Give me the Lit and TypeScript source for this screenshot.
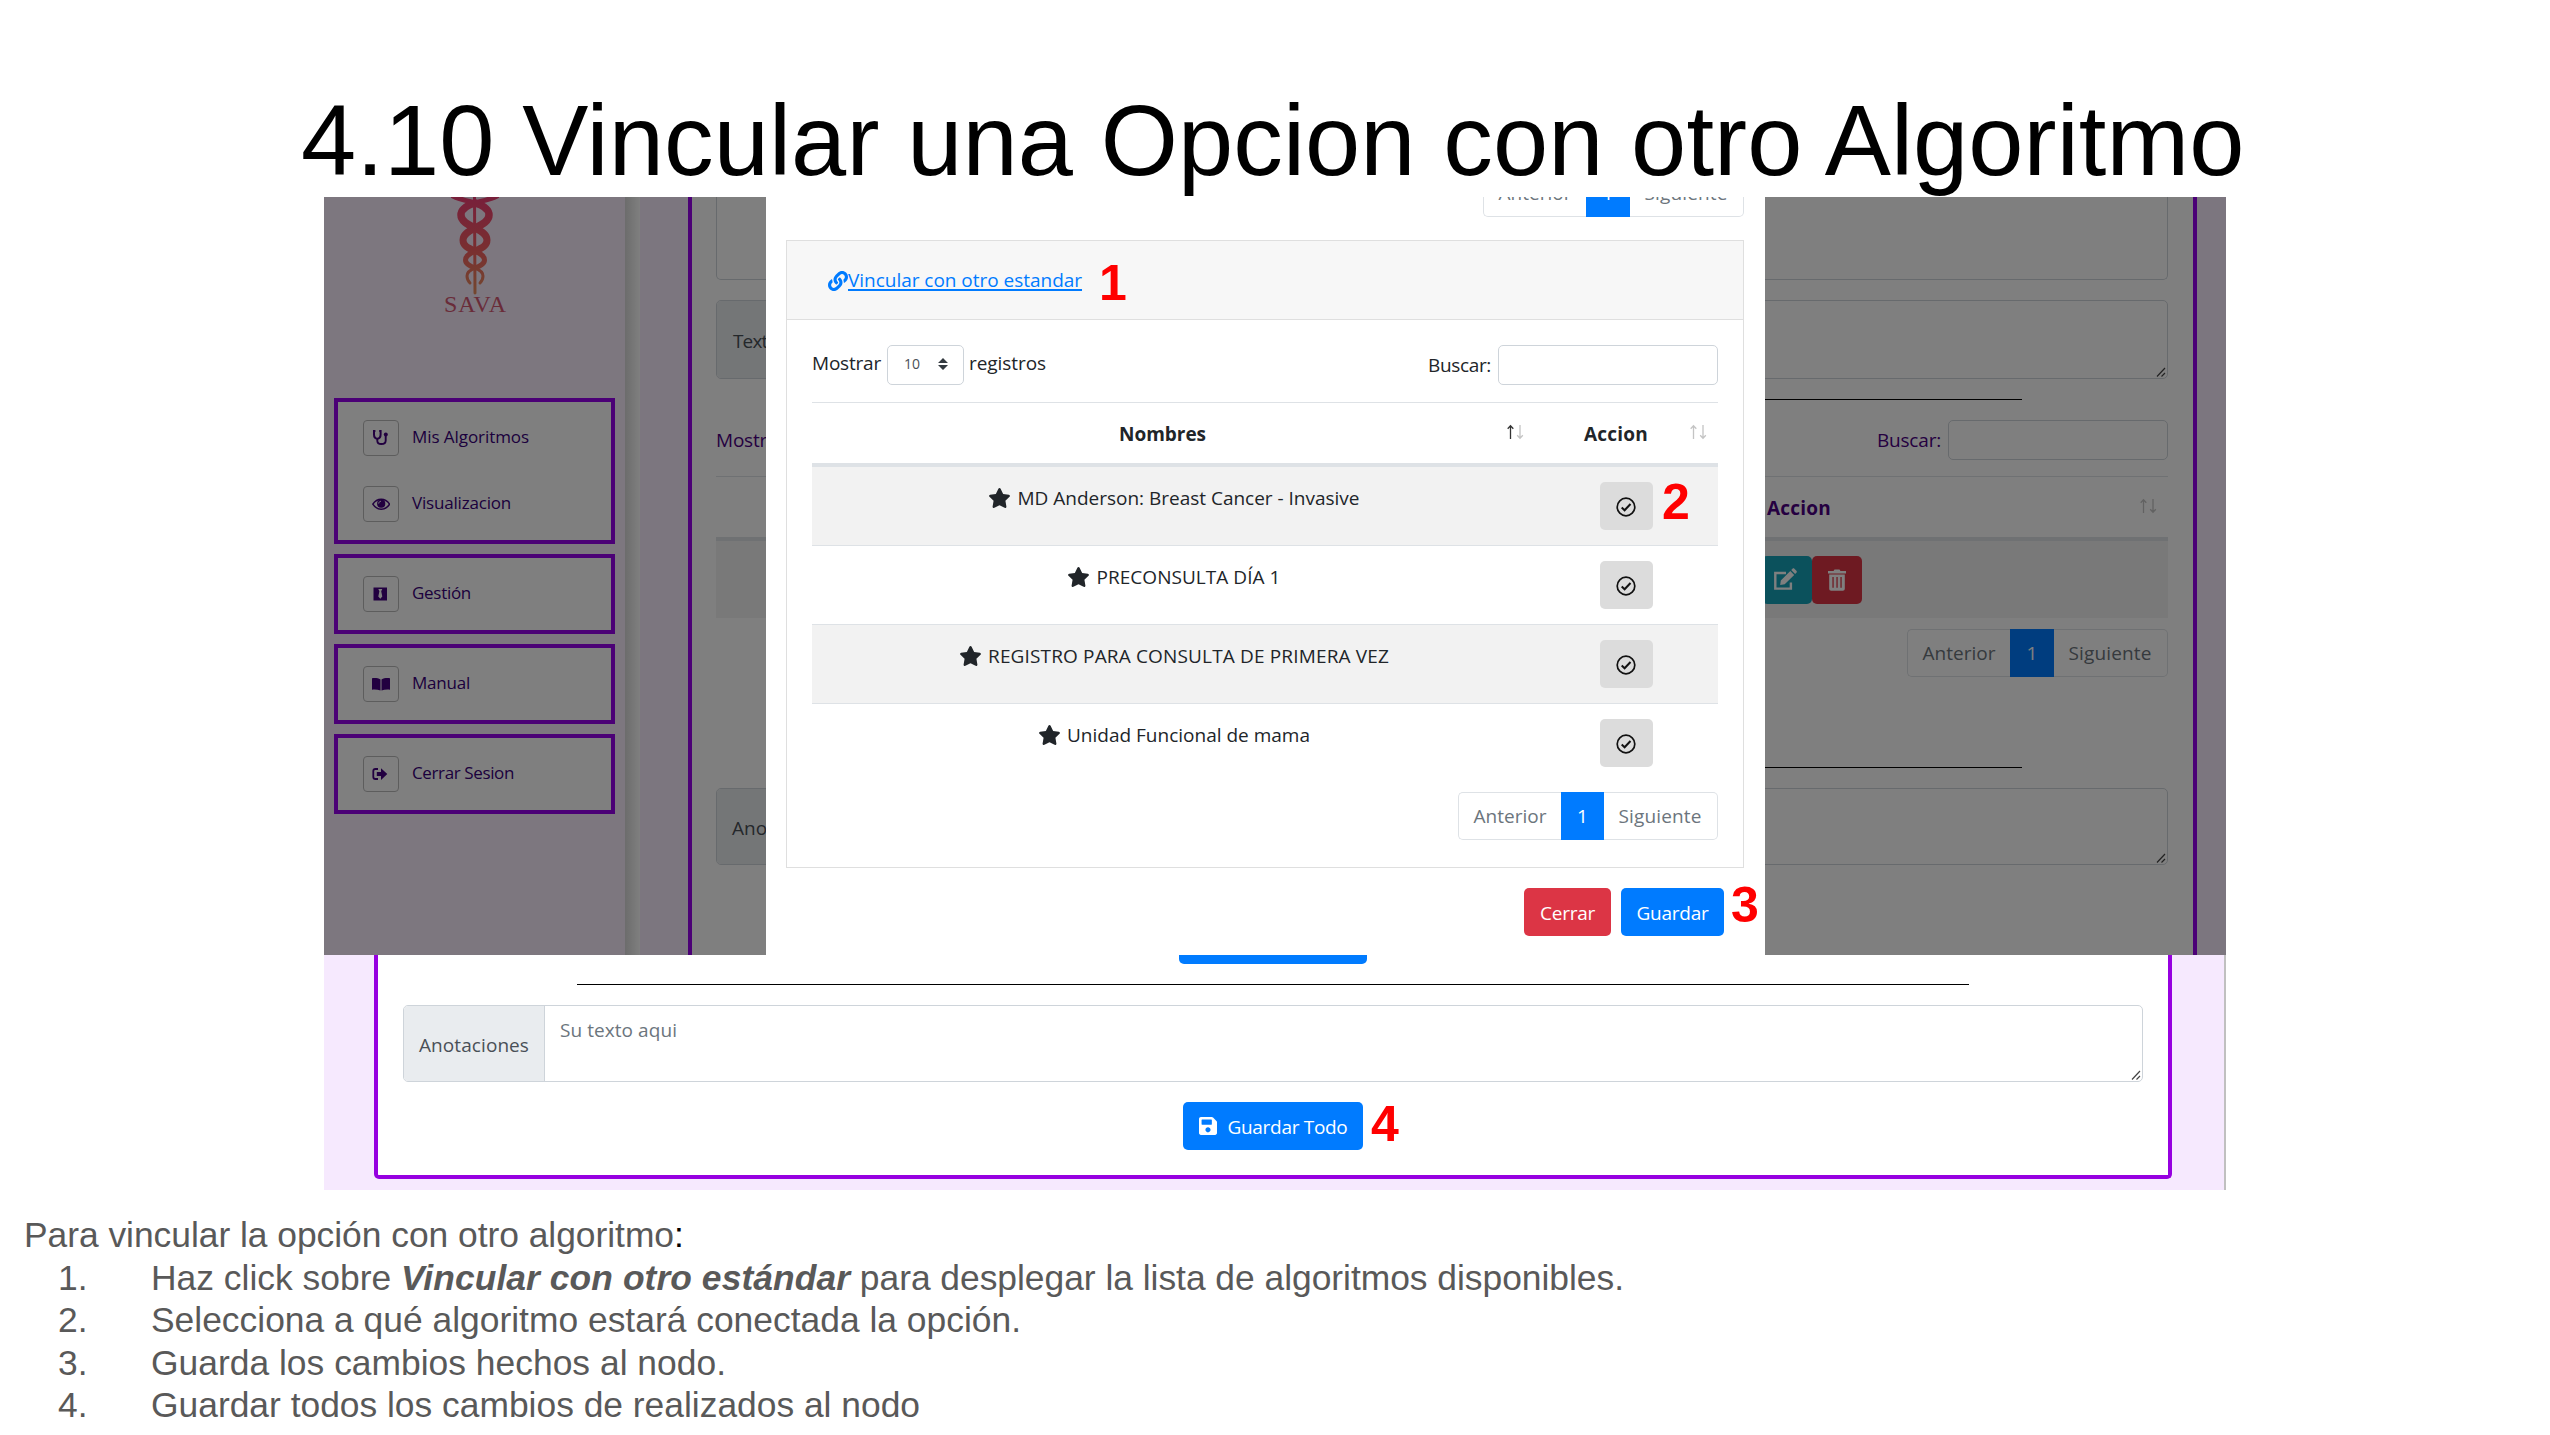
import { LitElement, html, css, svg } from "lit";
import { customElement } from "lit/decorators.js";
import { styleMap } from "lit/directives/style-map.js";

const UI = '"Open Sans", "Noto Sans", sans-serif';
const ARIAL = '"Liberation Sans", Arial, sans-serif';
const pen = document.createElement("canvas").getContext("2d")!;

/* Text run whose tracking is computed so that it spans the given width. */
const fit = (text: string, width: number, font: string) => {
  pen.font = font;
  const spacing = (width - pen.measureText(text).width) / text.length;
  return html`<span class="run" style=${styleMap({ letterSpacing: `${spacing.toFixed(3)}px` })}>${text}</span>`;
};
const ui = (text: string, width: number, size = 19, weight = 400) => fit(text, width, `${weight} ${size}px ${UI}`);
const doc = (text: string, width: number, size = 35.4, style = "") => fit(text, width, `${style} ${size}px ${ARIAL}`);

const icon = (name: string, box: string, body: unknown) =>
  html`<svg class="icon ${name}" viewBox=${box} fill="currentColor">${body}</svg>`;

const star = icon("star", "18 0 540 512", svg`<path d="M259.3 17.8L194 150.2 47.9 171.5c-26.2 3.8-36.7 36.1-17.7 54.6l105.7 103-25 145.5c-4.5 26.3 23.2 46 46.4 33.7L288 439.6l130.7 68.7c23.2 12.2 50.9-7.4 46.4-33.7l-25-145.5 105.7-103c19-18.5 8.5-50.8-17.7-54.6L382 150.2 316.7 17.8c-11.7-23.6-45.6-23.9-57.4 0z"/>`);
const save = icon("save", "0 32 448 448", svg`<path d="M433.941 129.941l-83.882-83.882A48 48 0 0 0 316.118 32H48C21.49 32 0 53.49 0 80v352c0 26.51 21.49 48 48 48h352c26.51 0 48-21.49 48-48V163.882a48 48 0 0 0-14.059-33.941zM224 416c-35.346 0-64-28.654-64-64 0-35.346 28.654-64 64-64s64 28.654 64 64c0 35.346-28.654 64-64 64zm96-304.52V212c0 6.627-5.373 12-12 12H76c-6.627 0-12-5.373-12-12V108c0-6.627 5.373-12 12-12h228.52c3.183 0 6.235 1.264 8.485 3.515l3.48 3.48A11.996 11.996 0 0 1 320 111.48z"/>`);
const link = icon("link-icon", "0 0 512 512", svg`<path d="M326.612 185.391c59.747 59.809 58.927 155.698.36 214.59-.11.12-.24.25-.36.37l-67.2 67.2c-59.27 59.27-155.699 59.262-214.96 0-59.27-59.26-59.27-155.7 0-214.96l37.106-37.106c9.84-9.84 26.786-3.3 27.294 10.606.648 17.722 3.826 35.527 9.69 52.721 1.986 5.822.567 12.262-3.783 16.612l-13.087 13.087c-28.026 28.026-28.905 73.66-1.155 101.96 28.024 28.579 74.086 28.749 102.325.51l67.2-67.19c28.191-28.191 28.073-73.757 0-101.83-3.701-3.694-7.429-6.564-10.341-8.569a16.037 16.037 0 0 1-6.947-12.606c-.396-10.567 3.348-21.456 11.698-29.806l21.054-21.055c5.521-5.521 14.182-6.199 20.584-1.731a152.482 152.482 0 0 1 20.522 17.197zM467.547 44.449c-59.261-59.262-155.69-59.27-214.96 0l-67.2 67.2c-.12.12-.25.25-.36.37-58.566 58.892-59.387 154.781.36 214.59a152.454 152.454 0 0 0 20.521 17.196c6.402 4.468 15.064 3.789 20.584-1.731l21.054-21.055c8.35-8.35 12.094-19.239 11.698-29.806a16.037 16.037 0 0 0-6.947-12.606c-2.912-2.005-6.64-4.875-10.341-8.569-28.073-28.073-28.191-73.639 0-101.83l67.2-67.19c28.239-28.239 74.3-28.069 102.325.51 27.75 28.3 26.872 73.934-1.155 101.96l-13.087 13.087c-4.35 4.35-5.769 10.79-3.783 16.612 5.864 17.194 9.042 34.999 9.69 52.721.509 13.906 17.454 20.446 27.294 10.606l37.106-37.106c59.271-59.259 59.271-155.699.001-214.959z"/>`);
const check = icon("check", "0 0 20 20", svg`<circle cx="10" cy="10" r="8.8" fill="none" stroke="currentColor" stroke-width="1.7"/><path d="M5.7 10.6l2.9 2.7 5.9-6.3" fill="none" stroke="currentColor" stroke-width="2"/>`);
const stethoscope = icon("nav-icon", "0 0 18 18", svg`<g fill="none" stroke="currentColor"><path d="M3.4 2H2v3.6c0 2.6 1.3 4.1 3.3 4.1s3.3-1.5 3.3-4.1V2H7.2" stroke-width="2"/><path d="M5.3 9.7v2c0 2 1.3 3.3 4 3.3s4.4-1.5 4.4-3.6V7" stroke-width="1.9"/></g><circle cx="13.8" cy="5.600" r="2"/>`);
const eye = icon("nav-icon", "0 0 18 18", svg`<path d="M.8 9.2C3 5.800 5.600 4.200 9.200 4.200s6.200 1.600 8.400 5c-2.200 3.300-4.800 5-8.400 5s-6.200-1.700-8.400-5z" fill="none" stroke="currentColor" stroke-width="1.500"/><circle cx="9.200" cy="8.700" r="4.100"/><path d="M6.700 8.600c0-1.400.9-2.300 2.300-2.300" fill="none" stroke="#fff" stroke-width=".9"/>`);
const tie = icon("nav-icon", "0 0 18 18", svg`<path fill-rule="evenodd" d="M1.500 2.500h13.500v13H1.500zM6.300 4l1.100 2.300-1.100 5.200 2 2.300 2-2.300-1.100-5.200L10.300 4z"/>`);
const book = icon("nav-icon", "0 0 18 18", svg`<path d="M0 3.200c3-.6 6-.2 8.500 1.200v11.200C6 14.600 3 14.300 0 14.700zM18 3.200c-3-.6-6-.2-8.500 1.200v11.200c2.500-1 5.500-1.300 8.500-.9z"/>`);
const exit = icon("nav-icon", "0 0 18 18", svg`<path d="M6 4H3.400C2 4 1.300 4.800 1.300 6v6c0 1.300.8 2 2.100 2H6" fill="none" stroke="currentColor" stroke-width="1.800"/><path d="M4.800 7.100h4.200V3.200l6.300 5.900L9 15v-3.900H4.800z"/>`);
const edit = icon("tool", "0 0 24 24", svg`<path d="M13 5H2.300v15.600h15.600V14.500" fill="none" stroke="currentColor" stroke-width="2.400"/><path d="M7.800 12.400L17.300 3l3.900 3.900-9.500 9.400-4.500.6zM18.200 2.100l1.300-1.300c.6-.6 1.300-.6 1.900 0l2 2c.6.6.6 1.300 0 1.900l-1.300 1.300z"/>`);
const trash = icon("tool", "0 0 24 24", svg`<path fill-rule="evenodd" d="M3 3h5.500L9.500 1.400h5L15.500 3H21v2.400H3zM4.200 6.500h15.600v14.200c0 1.200-.8 2-2 2H6.200c-1.200 0-2-.8-2-2zM7.400 9v10.700h1.300V9zM11.400 9v10.700h1.300V9zM15.400 9v10.700h1.300V9z"/>`);
const grip = icon("grip", "0 0 12 12", svg`<path d="M2 10.500L10 2M6.500 10.500L10 7" fill="none" stroke="#444" stroke-width="1.200"/>`);
const sort = (first: boolean) => html`<svg class="sort" viewBox="0 0 18 16" fill="none" stroke="currentColor" stroke-width="1.300"><path class=${first ? "on" : "off"} d="M4.500 15V2M1.700 4.800L4.500 1.800l2.800 3"/><path class="off" d="M14 1v13M11.200 11.200l2.800 3 2.800-3"/></svg>`;
const strand = svg`<path d="M2-1C10 3 18 4 24 6" stroke-width="5"/><path d="M24 6C34 9 38 13 38 18C38 24 32 27 24 31" stroke-width="7.500"/><path d="M24 31C16 35 12 38 12 43C12 49 17 51 24 54" stroke-width="7"/><path d="M24 54C30 57 33.500 59 33.500 63C33.500 67 29 69 24 71" stroke-width="5"/><path d="M24 71C19 73 16 76 16 79C16 82 17 84 19 86" stroke-width="3"/>`;
const caduceus = html`<svg class="caduceus" viewBox="0 0 48 98" fill="none">
  <defs><linearGradient id="fade" gradientUnits="userSpaceOnUse" x1="0" y1="0" x2="0" y2="98"><stop offset="0" stop-color="#f03f76"/><stop offset=".55" stop-color="#f35f60"/><stop offset="1" stop-color="#e8915f"/></linearGradient></defs>
  <g stroke="url(#fade)" stroke-linecap="round"><path d="M23.500 0L24 96" stroke-width="3"/>${strand}<g transform="matrix(-1 0 0 1 48 0)">${strand}</g></g></svg>`;

const pager = (on = "") => html`<div class="pager"><span class="page first">${ui("Anterior", 73)}</span><span class="page on ${on}">1</span><span class="page last">${ui("Siguiente", 83)}</span></div>`;

const nav = [
  [{ icon: stethoscope, label: "Mis Algoritmos", w: 117 }, { icon: eye, label: "Visualizacion", w: 99 }],
  [{ icon: tie, label: "Gestión", w: 59 }],
  [{ icon: book, label: "Manual", w: 58 }],
  [{ icon: exit, label: "Cerrar Sesion", w: 102 }],
];
const rows = [
  { name: "MD Anderson: Breast Cancer - Invasive", w: 342 },
  { name: "PRECONSULTA DÍA 1", w: 184 },
  { name: "REGISTRO PARA CONSULTA DE PRIMERA VEZ", w: 401 },
  { name: "Unidad Funcional de mama", w: 243 },
];

@customElement("app-root")
export class AppRoot extends LitElement {
  static styles = css`
    :host { display: block; width: 2550px; height: 1435px; overflow: hidden; background: #fff; position: relative; font-family: "Open Sans", "Noto Sans", sans-serif; font-size: 19px; color: #212529; }
    * { box-sizing: border-box; }
    .run { white-space: pre; }
    .icon { display: block; flex: none; }
    .title { height: 197px; margin: 0; padding: 85px 0 0 301px; font: 400 99.2px/112px "Liberation Sans", Arial, sans-serif; color: #000; white-space: nowrap; }
    .figure { width: 1902px; margin-left: 324px; }
    .shot { position: relative; display: flex; height: 758px; overflow: hidden; background: #f9edff; color: #4b0082; }
    .side { width: 301px; flex: none; background: #fbeeff; padding: 0 10px; display: flex; flex-direction: column; gap: 10px; }
    .brand { height: 191px; display: flex; flex-direction: column; align-items: center; }
    .caduceus { width: 48px; height: 98px; flex: none; margin-left: 1px; }
    .brand-name { font: 24px/24px "Liberation Serif", serif; margin-top: -3px; padding-left: 2px; color: #d35873; }
    .group { width: 281px; border: 4px solid #9600ec; background: #fff; padding: 18px 25px; display: flex; flex-direction: column; gap: 30px; }
    .item { display: flex; align-items: center; gap: 13px; height: 36px; font-size: 17px; line-height: 22px; color: #39007a; }
    .item .run { margin-top: -2px; }
    .chip { width: 36px; height: 36px; border: 1px solid #bbb; border-radius: 4px; display: flex; align-items: center; justify-content: center; color: #440080; flex: none; }
    .nav-icon { width: 18px; height: 18px; }
    .edge { width: 15px; flex: none; background: linear-gradient(90deg, #d9d9d9, #fff); }
    .gutter { width: 48px; flex: none; }
    .panel { width: 1509px; flex: none; border: solid #9600ec; border-width: 0 4px; background: #fff; padding: 0 25px 0 24px; display: flex; flex-direction: column; }
    .area { border: 1px solid #ced4da; border-radius: 5px; display: flex; position: relative; flex: none; }
    .area.cut { height: 83px; border-top: 0; border-radius: 0 0 5px 5px; }
    .area.mid { height: 79px; margin-top: 20px; }
    .area.low { height: 77px; margin-top: 20px; }
    .tag { width: 141px; background: #e9ecef; border-right: 1px solid #ced4da; border-radius: 4px 0 0 4px; padding: 2px 0 0 15px; display: flex; align-items: center; color: #495057; flex: none; }
    .area.mid .tag { padding-left: 16px; }
    .grip { position: absolute; right: 0; bottom: 0; width: 12px; height: 12px; }
    .rule { height: 1px; background: #000; flex: none; }
    .panel .rule { width: 1160px; margin: 20px 0 0 146px; }
    .filters { display: flex; justify-content: space-between; flex: none; }
    .panel .filters { margin-top: 20px; height: 56px; }
    .field { display: flex; align-items: center; height: 40px; }
    .search { width: 220px; height: 40px; border: 1px solid #ced4da; border-radius: 5px; margin-left: 7px; }
    .head { border-top: 1px solid #dee2e6; border-bottom: 4px solid #dee2e6; height: 65px; display: flex; position: relative; font-weight: 700; flex: none; }
    .panel .head { padding: 18px 11px 0 1051px; justify-content: space-between; line-height: 26px; }
    .stripe { height: 77px; background: #f2f2f2; padding: 15px 0 0 1046px; display: flex; flex: none; }
    .act { width: 50px; height: 48px; border-radius: 5px; color: #fff; display: flex; align-items: center; justify-content: center; }
    .act.teal { background: #17a2b8; padding-right: 4px; }
    .act.red { background: #dc3545; }
    .tool { width: 24px; height: 24px; }
    .pager { display: flex; height: 48px; line-height: 47px; align-self: flex-end; color: #6c757d; flex: none; }
    .panel .pager { margin-top: 11px; margin-bottom: 70px; }
    .page { border: 1px solid #dee2e6; text-align: center; }
    .page.first { width: 103px; border-radius: 5px 0 0 5px; border-right: 0; }
    .page.on { width: 43px; background: #007bff; border-color: #007bff; color: #fff; }
    .page.on.wide { width: 44px; }
    .page.last { width: 114px; border-radius: 0 5px 5px 0; border-left: 0; padding-right: 1px; }
    .dim { position: absolute; inset: 0; background: rgba(0, 0, 0, .5); }
    .modal { position: absolute; top: 0; left: 442px; width: 999px; height: 758px; background: #fff; padding: 0 21px 0 20px; color: #212529; display: flex; flex-direction: column; overflow: hidden; }
    .modal > .pager { margin-top: -28px; }
    .card { margin-top: 23px; height: 628px; border: 1px solid #dfdfdf; display: flex; flex-direction: column; flex: none; }
    .card-head { height: 79px; background: #f7f7f7; border-bottom: 1px solid #dfdfdf; display: flex; align-items: center; padding: 2px 0 0 41px; color: #007bff; flex: none; }
    .link-icon { width: 20px; height: 20px; }
    .link { text-decoration: underline; text-decoration-thickness: 2px; text-underline-offset: 2px; height: 26px; line-height: 25px; white-space: pre; }
    .card-body { padding: 25px 25px 0; display: flex; flex-direction: column; }
    .card-body .filters { height: 57px; }
    .show .run { margin-top: -4px; }
    .select { width: 77px; height: 40px; margin: 0 5px 0 6px; border: 1px solid #ced4da; border-radius: 5px; display: flex; align-items: center; justify-content: space-between; padding: 0 15px 0 16px; font-size: 14px; color: #495057; }
    .carets { width: 10px; height: 12px; margin-bottom: 2px; color: #343a40; }
    .card .head { height: 65px; line-height: 60px; padding-top: 1px; }
    .th1 { width: 725px; display: flex; justify-content: space-between; padding: 0 13px 0 307px; }
    .th2 { flex: 1; display: flex; justify-content: space-between; padding: 0 11px 0 47px; }
    .sort { width: 18px; height: 16px; }
    .card .sort { margin-top: 20px; }
    .panel .sort { margin-top: 3px; }
    .sort .on { stroke: #333; }
    .sort .off { stroke: #c4c4c4; }
    .row { display: flex; height: 79px; border-bottom: 1px solid #dee2e6; flex: none; }
    .row:nth-child(odd) { background: #f2f2f2; }
    .row.end { border-bottom: 0; }
    .rows { height: 325px; display: flex; flex-direction: column; flex: none; }
    .name { width: 725px; display: flex; justify-content: center; gap: 7px; padding-top: 18px; line-height: 26px; }
    .star { width: 21px; height: 20px; margin-top: 3px; }
    .cell { flex: 1; display: flex; justify-content: center; padding-top: 15px; padding-right: 3px; }
    .pick { width: 53px; height: 48px; border-radius: 5px; background: #dcdcdc; display: flex; align-items: center; justify-content: center; color: #111; padding-top: 1px; }
    .check { width: 20px; height: 20px; }
    .foot { display: flex; justify-content: flex-end; gap: 10px; margin-top: 20px; padding-right: 20px; }
    .btn { height: 48px; border-radius: 5px; color: #fff; display: flex; align-items: center; justify-content: center; background: #007bff; padding-top: 2px; flex: none; }
    .btn.close { width: 87px; background: #dc3545; }
    .btn.ok { width: 103px; }
    .shot.lower { height: 235px; background: #f6e9fe; border-right: 2px solid #c0c0c0; padding-left: 50px; align-items: flex-start; }
    .sheet { width: 1798px; height: 224px; border: solid #9600e0; border-width: 0 4px 4px; border-radius: 0 0 5px 5px; background: #fff; padding: 0 25px; display: flex; flex-direction: column; color: #212529; }
    .stub { width: 188px; height: 9px; border-radius: 0 0 5px 5px; background: #007bff; margin-left: 776px; flex: none; }
    .sheet .rule { width: 1392px; margin: 20px 0 0 174px; }
    .hint { padding: 11px 0 0 15px; line-height: 26px; color: #6c757d; }
    .btn.all { width: 180px; margin: 20px 0 0 780px; gap: 11px; }
    .save { width: 18px; height: 18px; margin-top: -2px; }
    .notes { padding: 24px 0 0 24px; font: 400 35.4px/42.5px "Liberation Sans", Arial, sans-serif; color: #595959; }
    .line { display: flex; height: 42.5px; white-space: pre; }
    .num { width: 93px; margin-left: 34px; }
    .dark { color: #000; }
    .strong { font-weight: 700; font-style: italic; }
    .mark { position: absolute; font: 700 50px/51px "Liberation Sans", Arial, sans-serif; color: #f00; }
    .m1 { left: 1099px; top: 258px; }
    .m2 { left: 1662px; top: 477px; }
    .m3 { left: 1731px; top: 880px; }
    .m4 { left: 1371px; top: 1099px; }
  `;

  render() {
    return html`
      <h1 class="title">${doc("4.10 Vincular una Opcion con otro Algoritmo", 1949, 99.2)}</h1>
      <div class="figure">
        <section class="shot">
          <aside class="side">
            <div class="brand">${caduceus}<div class="brand-name">${fit("SAVA", 63, '24px "Liberation Serif"')}</div></div>
            ${nav.map((g) => html`<nav class="group">${g.map((i) => html`<div class="item"><span class="chip">${i.icon}</span>${ui(i.label, i.w, 17)}</div>`)}</nav>`)}
          </aside>
          <div class="edge"></div>
          <div class="gutter"></div>
          <main class="panel">
            <div class="area cut"></div>
            <div class="area mid"><span class="tag">${ui("Texto", 45)}</span>${grip}</div>
            <div class="rule"></div>
            <div class="filters"><div class="field">${ui("Mostrar", 69)}</div><div class="field">${ui("Buscar:", 64)}<span class="search"></span></div></div>
            <div class="head">${ui("Accion", 64, 19, 700)}${sort(false)}</div>
            <div class="stripe"><span class="act teal">${edit}</span><span class="act red">${trash}</span></div>
            ${pager("wide")}
            <div class="rule"></div>
            <div class="area low"><span class="tag">${ui("Anotaciones", 110)}</span>${grip}</div>
          </main>
          <div class="dim"></div>
          <div class="modal">
            ${pager("wide")}
            <div class="card">
              <div class="card-head">${link}<a class="link">${ui("Vincular con otro estandar", 234)}</a></div>
              <div class="card-body">
                <div class="filters">
                  <div class="field show">${ui("Mostrar", 69)}<span class="select">${ui("10", 16, 14)}<svg class="carets" viewBox="0 0 10 12" fill="currentColor"><path d="M0 5L5 0l5 5zM0 7h10l-5 5z"/></svg></span>${ui("registros", 77)}</div>
                  <div class="field">${ui("Buscar:", 63)}<span class="search"></span></div>
                </div>
                <div class="head"><div class="th1">${ui("Nombres", 87, 19, 700)}${sort(true)}</div><div class="th2">${ui("Accion", 64, 19, 700)}${sort(false)}</div></div>
                <div class="rows">
                  ${rows.map((r, i) => html`<div class="row ${i === 3 ? "end" : ""}"><div class="name">${star}${ui(r.name, r.w)}</div><div class="cell"><span class="pick">${check}</span></div></div>`)}
                </div>
                ${pager()}
              </div>
            </div>
            <div class="foot"><span class="btn close">${ui("Cerrar", 55)}</span><span class="btn ok">${ui("Guardar", 72)}</span></div>
          </div>
        </section>
        <section class="shot lower">
          <div class="sheet">
            <div class="stub"></div>
            <div class="rule"></div>
            <div class="area low"><span class="tag">${ui("Anotaciones", 110)}</span><span class="hint">${ui("Su texto aqui", 117)}</span>${grip}</div>
            <div class="btn all">${save}${ui("Guardar Todo", 120)}</div>
          </div>
        </section>
      </div>
      <div class="notes">
        <div class="line">${doc("Para vincular la opción con otro algoritmo", 650)}<span class="dark">:</span></div>
        <div class="line"><span class="num">1.</span>${doc("Haz click sobre ", 250)}<span class="strong">${doc("Vincular con otro estándar", 449, 35.4, "italic bold")}</span>${doc(" para desplegar la lista de algoritmos disponibles.", 774)}</div>
        <div class="line"><span class="num">2.</span>${doc("Selecciona a qué algoritmo estará conectada la opción.", 870)}</div>
        <div class="line"><span class="num">3.</span>${doc("Guarda los cambios hechos al nodo.", 575)}</div>
        <div class="line"><span class="num">4.</span>${doc("Guardar todos los cambios de realizados al nodo", 769)}</div>
      </div>
      <span class="mark m1">1</span><span class="mark m2">2</span><span class="mark m3">3</span><span class="mark m4">4</span>
    `;
  }
}
